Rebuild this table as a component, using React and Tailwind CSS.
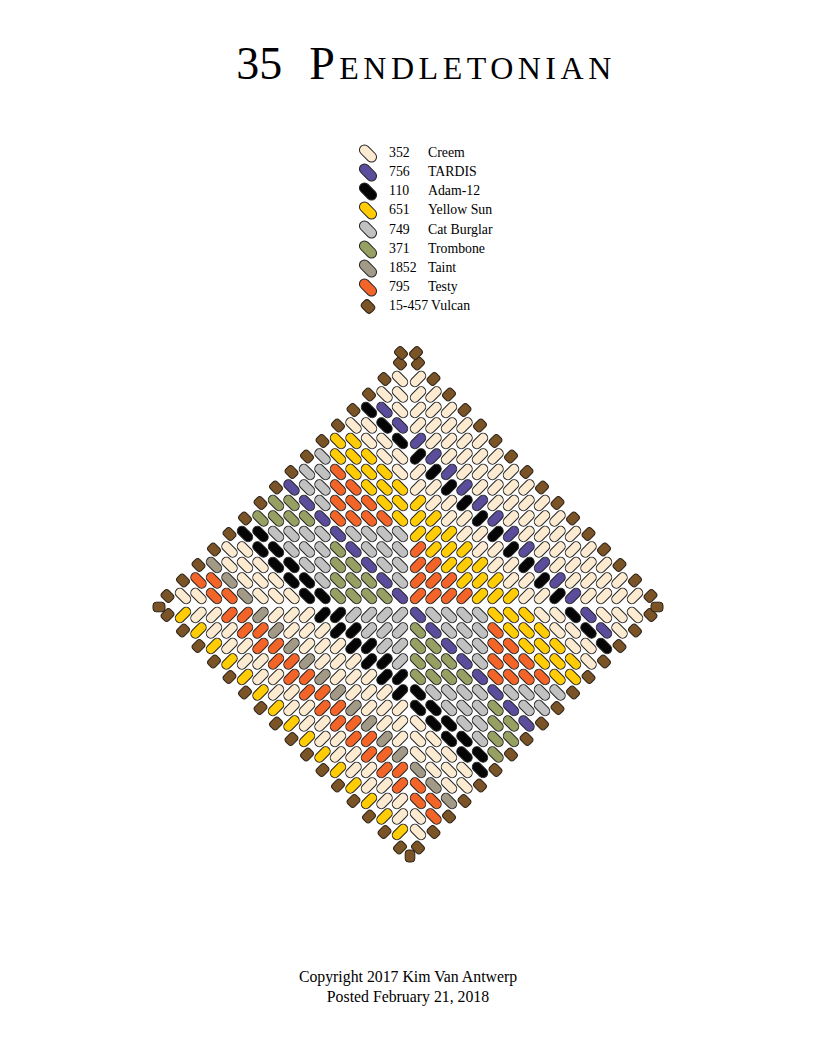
import React from "react";

const COLORS = {
  cr: "#fdebd1",
  pu: "#5b4c9c",
  bk: "#050505",
  ye: "#ffcc05",
  gr: "#c1c1c1",
  ol: "#979f63",
  ta: "#a29a86",
  or: "#f26428",
  br: "#7a5326",
};

const LEGEND = [
  ["cr", "352", "Creem"],
  ["pu", "756", "TARDIS"],
  ["bk", "110", "Adam-12"],
  ["ye", "651", "Yellow Sun"],
  ["gr", "749", "Cat Burglar"],
  ["ol", "371", "Trombone"],
  ["ta", "1852", "Taint"],
  ["or", "795", "Testy"],
  ["br", "15-457", "Vulcan"],
];

const PITCH = 15.5;

// top-left quadrant, r = row up from center, c = column out from center
function topLeft(r, c) {
  if (r + c === 15) return "br";
  const d = r - c;
  if ((r <= 4 && c <= 4) || (r >= 5 && c >= 5)) {
    if (d === 0) return "pu";
    return d > 0 ? "gr" : "ol";
  }
  if (r <= 4) {
    const k = c - r;
    if (k <= 4) return "gr";
    if (k <= 6) return "bk";
    if (k <= 9) return "cr";
    if (k === 10) return "ta";
    if (k <= 12) return "or";
    return "cr";
  }
  const k = r - c;
  if (k <= 4) return "or";
  if (k <= 7) return "ye";
  if (k <= 9) return "cr";
  if (k === 10) return "bk";
  if (k === 11) return "pu";
  return "cr";
}

function topRight(r, c) {
  const s = r + c;
  if (s === 15) return "br";
  if (s <= 3) return "or";
  if (s <= 6) return "ye";
  if (s <= 8) return "cr";
  if (s === 9) return "bk";
  if (s === 10) return "pu";
  return "cr";
}

function bottomLeft(r, c) {
  const s = r + c;
  if (s === 15) return "br";
  if (s <= 3) return "gr";
  if (s <= 5) return "bk";
  if (s <= 8) return "cr";
  if (s === 9) return "ta";
  if (s <= 11) return "or";
  if (s <= 13) return "cr";
  return "ye";
}

function bottomRight(r, c) {
  return topLeft(c, r);
}

function Bead({ x, y, angle, color }) {
  if (color === "br") {
    return (
      <rect
        x={-6}
        y={-4.8}
        width={12}
        height={9.6}
        rx={3.2}
        transform={`translate(${x} ${y}) rotate(${angle})`}
        fill={COLORS.br}
        stroke="#2b2118"
        strokeWidth={1}
      />
    );
  }
  return (
    <rect
      x={-9}
      y={-4.6}
      width={18}
      height={9.2}
      rx={4.6}
      transform={`translate(${x} ${y}) rotate(${angle})`}
      fill={COLORS[color]}
      stroke="#222"
      strokeWidth={1}
    />
  );
}

function Diamond() {
  const beads = [];
  for (let r = 0; r <= 15; r++) {
    for (let c = 0; c + r <= 15; c++) {
      const xl = 400 - PITCH * c;
      const xr = 418 + PITCH * c;
      const yt = 595 - PITCH * r;
      const yb = 614 + PITCH * r;
      beads.push({ k: `tl${r}-${c}`, x: xl, y: yt, a: 45, col: topLeft(r, c) });
      beads.push({ k: `tr${r}-${c}`, x: xr, y: yt, a: -45, col: topRight(r, c) });
      beads.push({ k: `bl${r}-${c}`, x: xl, y: yb, a: -45, col: bottomLeft(r, c) });
      beads.push({ k: `br${r}-${c}`, x: xr, y: yb, a: 45, col: bottomRight(r, c) });
    }
  }
  // extra beads at the four points
  beads.push({ k: "x1", x: 401, y: 352, a: 45, col: "br" });
  beads.push({ k: "x2", x: 416, y: 352, a: -45, col: "br" });
  beads.push({ k: "x3", x: 159, y: 606, a: 0, col: "br" });
  beads.push({ k: "x4", x: 657, y: 606, a: 0, col: "br" });
  beads.push({ k: "x5", x: 410, y: 855, a: 90, col: "br" });

  return (
    <svg width="520" height="525" viewBox="148 340 520 525">
      {beads.map((b) => (
        <Bead key={b.k} x={b.x} y={b.y} angle={b.a} color={b.col} />
      ))}
    </svg>
  );
}

export default function App() {
  return (
    <div className="w-[816px] h-[1056px] bg-white text-black font-['Liberation_Serif','Times_New_Roman',serif]">
      {/* Title */}
      <div className="pt-[38px] pl-[36px] flex justify-center leading-[52px] text-[46px]">
        <span>35</span>
        <span className="ml-[27px] tracking-[4.5px] [font-variant-caps:small-caps]">Pendletonian</span>
      </div>

      {/* Legend */}
      <div className="mt-[54px] ml-[358px] flex flex-col text-[13.8px]">
        {LEGEND.map(([col, code, name]) => (
          <div key={code} className="flex items-center h-[19.1px]">
            <svg width="20" height="19" viewBox="-10 -9.5 20 19">
              {col === "br" ? (
                <rect x={-6.5} y={-5} width={13} height={10} rx={3.5} transform="rotate(45)" fill={COLORS.br} stroke="#2b2118" strokeWidth={1} />
              ) : (
                <rect x={-10} y={-5} width={20} height={10} rx={5} transform="rotate(45)" fill={COLORS[col]} stroke="#222" strokeWidth={1} />
              )}
            </svg>
            <span className="ml-[11px] min-w-[36px]">{code}</span>
            <span className="ml-[3px]">{name}</span>
          </div>
        ))}
      </div>

      {/* Pattern */}
      <div className="mt-[25px] flex justify-center">
        <Diamond />
      </div>

      {/* Footer */}
      <div className="mt-[101px] text-center text-[15.8px] leading-[20px]">
        <p>Copyright 2017 Kim Van Antwerp</p>
        <p>Posted February 21, 2018</p>
      </div>
    </div>
  );
}
